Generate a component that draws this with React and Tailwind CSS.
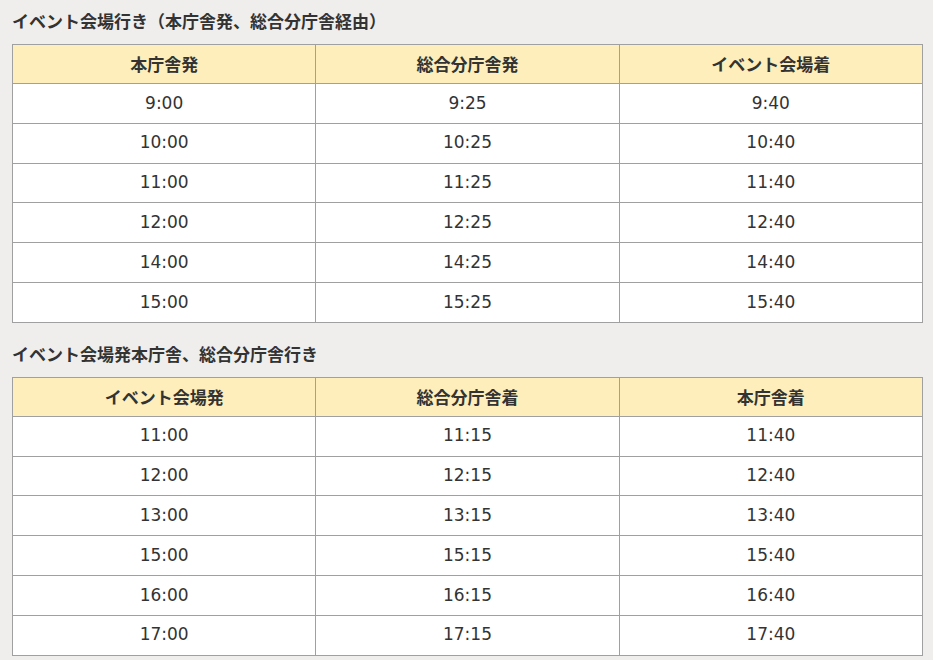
const OUTBOUND = {
  title: "イベント会場行き（本庁舎発、総合分庁舎経由）",
  head: ["本庁舎発", "総合分庁舎発", "イベント会場着"],
  rows: [
    ["9:00", "9:25", "9:40"],
    ["10:00", "10:25", "10:40"],
    ["11:00", "11:25", "11:40"],
    ["12:00", "12:25", "12:40"],
    ["14:00", "14:25", "14:40"],
    ["15:00", "15:25", "15:40"],
  ],
};

const INBOUND = {
  title: "イベント会場発本庁舎、総合分庁舎行き",
  head: ["イベント会場発", "総合分庁舎着", "本庁舎着"],
  rows: [
    ["11:00", "11:15", "11:40"],
    ["12:00", "12:15", "12:40"],
    ["13:00", "13:15", "13:40"],
    ["15:00", "15:15", "15:40"],
    ["16:00", "16:15", "16:40"],
    ["17:00", "17:15", "17:40"],
  ],
};

function Timetable({ data }) {
  return (
    <section>
      <h2 className="h-[44px] flex items-center text-[17px] font-bold text-[#333] pb-[2px]">
        {data.title}
      </h2>
      <table className="w-[911px] border-collapse table-fixed bg-white">
        <thead>
          <tr>
            {data.head.map((h) => (
              <th
                key={h}
                className="h-[39px] border border-[#a0a0a0] bg-[#fdeebb] text-[17px] font-bold text-[#333] text-center"
              >
                {h}
              </th>
            ))}
          </tr>
        </thead>
        <tbody>
          {data.rows.map((row, i) => (
            <tr key={i}>
              {row.map((t, j) => (
                <td
                  key={j}
                  className="h-[39.8px] border border-[#a0a0a0] text-center text-[17px] text-[#333] font-['DejaVu_Sans',sans-serif]"
                >
                  {t}
                </td>
              ))}
            </tr>
          ))}
        </tbody>
      </table>
    </section>
  );
}

export default function App() {
  return (
    <div className="w-[933px] h-[660px] overflow-hidden bg-[#efeeed] pl-3 font-['Noto_Sans_CJK_JP','Noto_Sans',sans-serif]">
      <Timetable data={OUTBOUND} />
      <div className="h-[10px]" />
      <Timetable data={INBOUND} />
    </div>
  );
}
